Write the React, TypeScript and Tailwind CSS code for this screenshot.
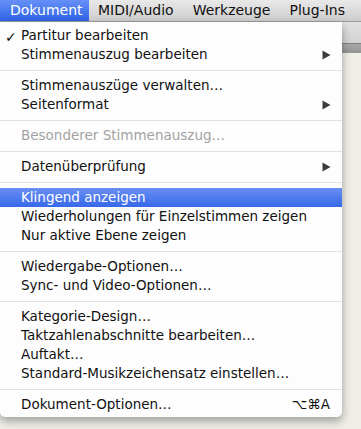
import { Fragment } from 'react';

type Item =
    | { kind: 'sep' }
    | { kind: 'item'; label: string; check?: boolean; sub?: boolean; disabled?: boolean; active?: boolean; shortcut?: string };

const items: Item[] = [
    { kind: 'item', label: 'Partitur bearbeiten', check: true },
    { kind: 'item', label: 'Stimmenauszug bearbeiten', sub: true },
    { kind: 'sep' },
    { kind: 'item', label: 'Stimmenauszüge verwalten…' },
    { kind: 'item', label: 'Seitenformat', sub: true },
    { kind: 'sep' },
    { kind: 'item', label: 'Besonderer Stimmenauszug…', disabled: true },
    { kind: 'sep' },
    { kind: 'item', label: 'Datenüberprüfung', sub: true },
    { kind: 'sep' },
    { kind: 'item', label: 'Klingend anzeigen', active: true },
    { kind: 'item', label: 'Wiederholungen für Einzelstimmen zeigen' },
    { kind: 'item', label: 'Nur aktive Ebene zeigen' },
    { kind: 'sep' },
    { kind: 'item', label: 'Wiedergabe-Optionen…' },
    { kind: 'item', label: 'Sync- und Video-Optionen…' },
    { kind: 'sep' },
    { kind: 'item', label: 'Kategorie-Design…' },
    { kind: 'item', label: 'Taktzahlenabschnitte bearbeiten…' },
    { kind: 'item', label: 'Auftakt…' },
    { kind: 'item', label: 'Standard-Musikzeichensatz einstellen…' },
    { kind: 'sep' },
    { kind: 'item', label: 'Dokument-Optionen…', shortcut: '⌥⌘A' },
];

const titles = ['MIDI/Audio', 'Werkzeuge', 'Plug-Ins'];

const Arrow = () => (
    <svg width="9" height="10" viewBox="0 0 9 10" className="shrink-0">
        <path d="M0.5 0.5 L8.5 5 L0.5 9.5 Z" fill="#3a3a3a" />
    </svg>
);

export default function App() {
    return (
        <div className="relative w-[361px] h-[429px] overflow-hidden bg-[#efeee8] font-['DejaVu_Sans',sans-serif]">
            {/* menu bar */}
            <div className="flex h-[22px] items-stretch bg-gradient-to-b from-[#e9e9e9] to-[#cdcdcd] border-b border-[#9a9a9a] text-[14px] text-[#111]">
                <div className="flex items-center pl-[10px] w-[89px] shrink-0 bg-gradient-to-b from-[#6690f7] to-[#2f62e6] text-white">
                    Dokument
                </div>
                {titles.map((t) => (
                    <div key={t} className="flex items-center pl-[9px] pr-[10px] whitespace-nowrap">
                        {t}
                    </div>
                ))}
            </div>

            {/* window behind */}
            <div className="flex flex-col">
                <div className="h-[21px] bg-gradient-to-b from-[#e2e2e2] to-[#d2d2d2]" />
                <div className="h-[10px] bg-gradient-to-b from-[#a9a9a9] to-[#949494] border-t border-[#7e7e7e]" />
            </div>

            {/* dropdown */}
            <div className="absolute left-0 top-[22px] w-[342px] pt-[4px] pb-[3px] bg-[#fdfdfd] rounded-b-[5px] shadow-[0_4px_10px_rgba(0,0,0,0.35)] text-[13.5px] text-[#111]">
                {items.map((it, i) => (
                    <Fragment key={i}>
                        {it.kind === 'sep' ? (
                            <div className="h-[12px] flex items-center">
                                <div className="h-px w-full bg-[#e1e1e1]" />
                            </div>
                        ) : (
                            <div
                                className={`h-[19px] flex items-center pl-[21px] pr-[11px] relative ${
                                    it.active ? 'bg-gradient-to-b from-[#6a8ff5] to-[#3668e8] text-white' : ''
                                } ${it.disabled ? 'text-[#a3a3a3]' : ''}`}
                            >
                                {it.check && (
                                    <span className="absolute left-[5px] top-[1px] text-[14px]">✓</span>
                                )}
                                <span className="flex-1 whitespace-nowrap">{it.label}</span>
                                {it.sub && <Arrow />}
                                {it.shortcut && <span className="mr-[1px]">{it.shortcut}</span>}
                            </div>
                        )}
                    </Fragment>
                ))}
            </div>
        </div>
    );
}
